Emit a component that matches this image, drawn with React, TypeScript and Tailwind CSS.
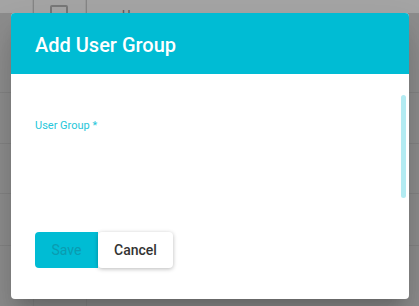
import React from "react";

const ROW_LINES = [92, 143, 193, 245];

function BackdropTable() {
  return (
    <div className="absolute inset-0 bg-[#8c8c8c]">
      <div className="flex h-[13px] bg-[#a4a4a4]">
        <div className="w-[33px] border-r border-[#999]" />
        <div className="flex w-[53px] justify-center border-r border-[#999] pt-[5px]">
          <div className="h-[18px] w-[18px] rounded-[2px] border-2 border-[#777]" />
        </div>
        <div className="pl-[36px] pt-[8px] text-[13px] leading-none text-[#555]">U</div>
      </div>
      <div className="absolute left-[33px] top-0 h-full w-px bg-[#858585]" />
      <div className="absolute left-[86px] top-0 h-full w-px bg-[#858585]" />
      {ROW_LINES.map((y) => (
        <div key={y} className="absolute left-0 h-px w-full bg-[#828282]" style={{ top: y }} />
      ))}
    </div>
  );
}

export default function App() {
  return (
    <div
      className="relative h-[306px] w-[419px] overflow-hidden"
      style={{ fontFamily: "Roboto, 'Liberation Sans', sans-serif" }}
    >
      <BackdropTable />

      {/* dialog */}
      <div className="absolute left-[11px] top-[13px] flex h-[286px] w-[398px] flex-col overflow-hidden rounded-[4px] bg-white shadow-[0_11px_15px_-7px_rgba(0,0,0,0.2),0_24px_38px_3px_rgba(0,0,0,0.14)]">
        <div className="flex h-[61px] items-center bg-[#00bcd4] px-6">
          <h2 className="pt-[3px] text-[20px] font-medium text-white">Add User Group</h2>
        </div>

        <div className="relative flex flex-1 flex-col px-6">
          <label className="mt-[46px] text-[11px] leading-none text-[#26c6da]">User Group *</label>

          <div className="mt-auto mb-[31px] flex">
            <button
              disabled
              className="h-9 w-[63px] rounded-l-[4px] bg-[#00bcd4] text-[14px] text-[#0a9bb0]"
            >
              Save
            </button>
            <button className="h-9 w-[75px] rounded-[4px] bg-white text-[14px] font-medium text-[#333] shadow-[0_1px_4px_rgba(0,0,0,0.28)]">
              Cancel
            </button>
          </div>

          <div className="absolute right-[3px] top-[21px] h-[103px] w-[5px] rounded-full bg-[#b2ebf2]" />
        </div>
      </div>
    </div>
  );
}
